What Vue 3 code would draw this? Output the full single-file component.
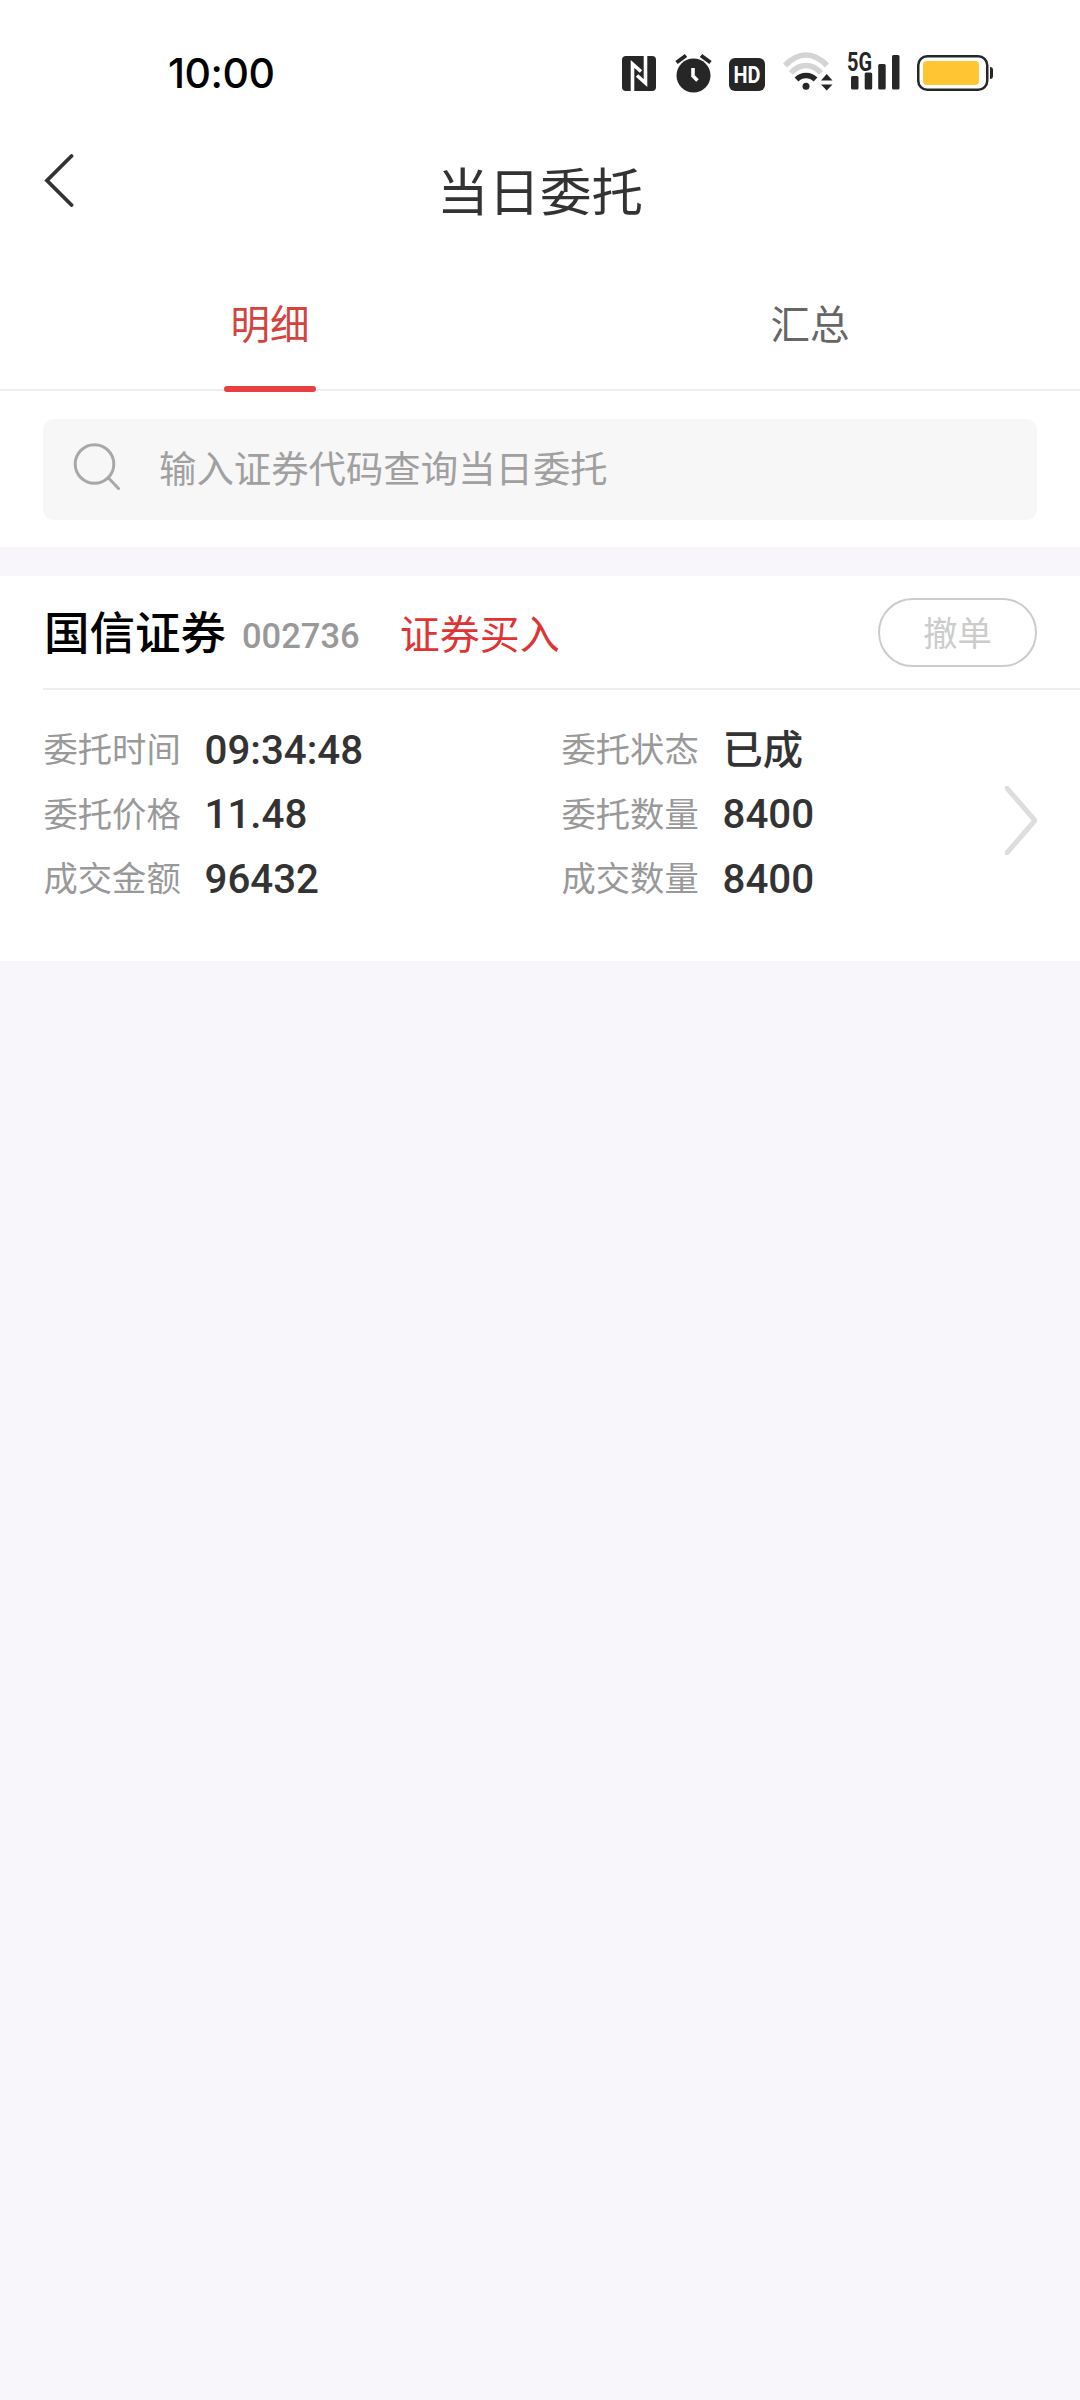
<script setup>
import { ref } from 'vue'

const tabs = ['明细', '汇总']
const activeTab = ref(0)

const order = {
  name: '国信证券',
  code: '002736',
  type: '证券买入',
  fields: [
    { label: '委托时间', value: '09:34:48' },
    { label: '委托状态', value: '已成' },
    { label: '委托价格', value: '11.48' },
    { label: '委托数量', value: '8400' },
    { label: '成交金额', value: '96432' },
    { label: '成交数量', value: '8400' },
  ],
}
</script>

<template>
  <div class="page">
    <div class="status-bar">
      <span class="time">10:00</span>
      <div class="status-icons">
        <svg class="nfc" width="34" height="35" viewBox="0 0 34 35">
          <rect width="34" height="35" rx="4" fill="#262626" />
          <path d="M10.5 35V8L19 15.5M23.5 0V27L15 19.5" fill="none" stroke="#fff" stroke-width="3.6" />
        </svg>
        <svg class="alarm" width="37" height="40" viewBox="0 0 37 40">
          <circle cx="18.5" cy="22.5" r="17" fill="#262626" />
          <path d="M1.5 9.5L11 2.5M35.5 9.5L26 2.5" stroke="#262626" stroke-width="4" />
          <path d="M18 15V23L22.5 27.5" fill="none" stroke="#fff" stroke-width="3.6" />
        </svg>
        <svg class="hd" width="36" height="33" viewBox="0 0 36 33">
          <rect width="36" height="33" rx="6" fill="#262626" />
          <text x="4.500" y="25" textLength="27" lengthAdjust="spacingAndGlyphs">HD</text>
        </svg>
        <svg class="wifi" width="50" height="39" viewBox="0 0 50 39">
          <g fill="none" stroke-width="5.5">
            <path d="M2 13.5Q12 3 23 3T44 13.5" stroke="#d4d4d4" />
            <path d="M8 21Q14.5 13.5 23 13.5T38 21" stroke="#d4d4d4" />
            <path d="M13.5 27.5Q17.5 23.5 23 23.5T32.5 27.5" stroke="#262626" />
          </g>
          <circle cx="23" cy="34.3" r="3.5" fill="#262626" />
          <path d="M38 28.5L43.7 22L49.5 28.5ZM38 32.5L43.7 38.5L49.5 32.5Z" fill="#262626" />
        </svg>
        <svg class="signal" width="54" height="50" viewBox="0 -6 54 50">
          <text x="0" y="18.5" textLength="25" lengthAdjust="spacingAndGlyphs">5G</text>
          <g fill="#262626">
            <rect x="4" y="24" width="7.5" height="13.5" rx="1.5" />
            <rect x="17.7" y="20.5" width="7.5" height="17" rx="1.5" />
            <rect x="31.2" y="12" width="7.5" height="25.5" rx="1.5" />
            <rect x="45" y="3" width="7.5" height="34.5" rx="1.5" />
          </g>
        </svg>
        <svg class="battery" width="76" height="36" viewBox="0 0 76 36">
          <rect x="1.25" y="1.25" width="69" height="33.5" rx="9" fill="none" stroke="#262626" stroke-width="2.5" />
          <rect x="6" y="6" width="56" height="24" rx="4" fill="#ffc533" />
          <path d="M73 12Q76 12 76 15V21Q76 24 73 24Z" fill="#262626" />
        </svg>
      </div>
    </div>

    <header class="nav">
      <svg class="back" width="30" height="54" viewBox="0 0 30 54">
        <path d="M27.5 3L3 27.5L27.5 52" fill="none" stroke="#333" stroke-width="3.8" stroke-linecap="round" />
      </svg>
      <h1 class="title">当日委托</h1>
    </header>

    <nav class="tabs">
      <div
        v-for="(tab, i) in tabs"
        :key="tab"
        class="tab"
        :class="{ active: activeTab === i }"
        @click="activeTab = i"
      >
        {{ tab }}
      </div>
    </nav>

    <div class="search-wrap">
      <div class="search">
        <svg width="48" height="50" viewBox="0 0 48 50" fill="none" stroke="#a8a8a8" stroke-width="3">
          <circle cx="22.5" cy="22" r="19.3" />
          <path d="M36.5 36L46.5 46.5" stroke-linecap="round" />
        </svg>
        <span class="placeholder">输入证券代码查询当日委托</span>
      </div>
    </div>

    <section class="order">
      <div class="order-head">
        <span class="name">{{ order.name }}</span>
        <span class="code">{{ order.code }}</span>
        <span class="type">{{ order.type }}</span>
        <button class="cancel">撤单</button>
      </div>
      <div class="order-body">
        <div class="fields">
          <div v-for="field in order.fields" :key="field.label" class="field">
            <span class="label">{{ field.label }}</span>
            <span class="value">{{ field.value }}</span>
          </div>
        </div>
        <svg class="arrow" width="32" height="69" viewBox="0 0 32 69">
          <path d="M0 0L30 34.5L0 69" fill="none" stroke="#ddd" stroke-width="5" />
        </svg>
      </div>
    </section>
  </div>
</template>

<style>
body {
  background: #f8f6fa;
}
</style>

<style scoped>
.page {
  min-height: 2400px;
  background: #f8f6fa;
  font-family: Roboto, "Noto Sans CJK SC", sans-serif;
  color: #333;
}

.status-bar {
  display: flex;
  justify-content: space-between;
  height: 146px;
  padding: 0 87px 0 168px;
  box-sizing: border-box;
  background: #fff;
}

.time {
  font-family: Inter, sans-serif;
  font-size: 41px;
  font-weight: 500;
  line-height: 146px;
  letter-spacing: -0.5px;
  color: #000;
}

.status-icons {
  display: flex;
  align-items: center;
  height: 146px;
}

.nfc {
  margin-right: 19px;
}

.alarm {
  margin-right: 17px;
}

.hd {
  margin-top: 3px;
  margin-right: 18px;
  overflow: visible;
}

.hd text {
  font: 700 24px Roboto, sans-serif;
  fill: #fff;
}

.wifi {
  margin-top: -3px;
  margin-right: 14px;
}

.signal {
  margin-top: -4px;
  margin-right: 16px;
}

.signal text {
  font: 700 25px Roboto, sans-serif;
  fill: #262626;
}

.nav {
  display: grid;
  grid-template-columns: 120px 1fr 120px;
  align-items: start;
  height: 133px;
  background: #fff;
}

.back {
  margin-top: 7px;
  margin-left: 44px;
}

.title {
  margin: 18px 0 0;
  font-size: 51.5px;
  font-weight: 400;
  line-height: 60px;
  text-align: center;
}

.tabs {
  display: flex;
  height: 110px;
  background: #fff;
  border-bottom: 2px solid #eee;
}

.tab {
  display: flex;
  flex: 1;
  flex-direction: column;
  align-items: center;
  font-size: 39.5px;
  line-height: 93px;
  color: #666;
}

.tab.active {
  color: #d5433f;
}

.tab.active::after {
  content: "";
  flex: none;
  width: 92px;
  height: 6px;
  margin-top: 14px;
  border-radius: 3px;
  background: #e8403e;
}

.search-wrap {
  padding: 28px 43px 27px;
  background: #fff;
}

.search {
  display: flex;
  align-items: center;
  height: 101px;
  padding: 0 29px 6px;
  border-radius: 11px;
  background: #f7f7f7;
  box-sizing: border-box;
}

.placeholder {
  margin-left: 39px;
  font-size: 37.4px;
  color: #a0a0a0;
}

.order {
  margin-top: 29px;
  padding-left: 43px;
  background: #fff;
}

.order-head {
  display: flex;
  align-items: center;
  height: 112px;
  padding-right: 43px;
  border-bottom: 2px solid #eee;
}

.name {
  margin-top: -5px;
  margin-left: 1px;
  font-size: 45.5px;
  font-weight: 500;
  color: #000;
}

.code {
  margin-top: 8px;
  margin-left: 16px;
  font-size: 34.5px;
  font-weight: 500;
  color: #999;
}

.type {
  margin-left: 40px;
  font-size: 40px;
  color: #e03434;
}

.cancel {
  width: 159px;
  height: 69px;
  margin-top: 1px;
  margin-left: auto;
  padding: 0 0 4px;
  border: 2px solid #ccc;
  border-radius: 35px;
  background: none;
  font-family: inherit;
  font-size: 34.3px;
  color: #ccc;
}

.order-body {
  display: flex;
  align-items: flex-start;
  height: 271px;
  padding-right: 43px;
}

.fields {
  display: grid;
  flex: 1;
  grid-template-columns: 518px 1fr;
  grid-auto-rows: 64.5px;
  padding-top: 27px;
}

.field {
  display: flex;
  align-items: center;
}

.label {
  width: 161px;
  margin-top: -4px;
  margin-left: 0.5px;
  font-size: 34.3px;
  color: #999;
}

.value {
  margin-top: 3px;
  font-size: 40.3px;
  font-weight: 500;
  line-height: 48px;
  color: #333;
}

.arrow {
  margin-top: 96px;
}
</style>
